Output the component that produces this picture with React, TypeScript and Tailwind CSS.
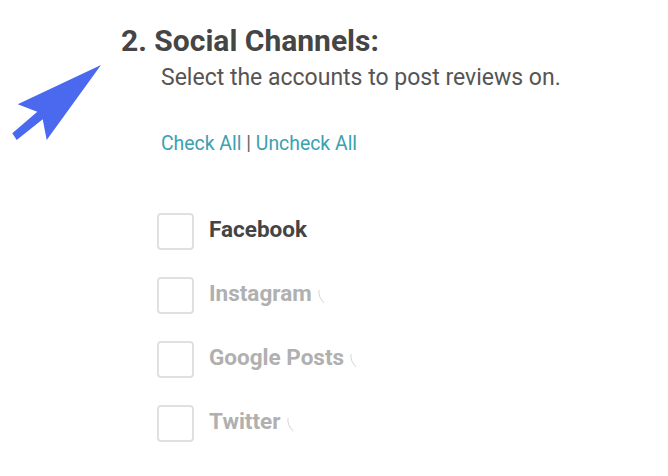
const channels = [
  { name: 'Facebook', active: true },
  { name: 'Instagram', active: false, mark: true },
  { name: 'Google Posts', active: false, mark: true },
  { name: 'Twitter', active: false, mark: true },
];

// pointer arrow drawn over the page
function Pointer() {
  return (
    <svg className="absolute left-0 top-0" width="110" height="150" viewBox="0 0 110 150">
      <polygon
        points="101,65 17.7,104.3 37.3,111.7 12.3,133.3 16.7,140 42.7,119.3 46.7,140"
        fill="#4a69ee"
      />
    </svg>
  );
}

export default function App() {
  return (
    <div className="relative w-[668px] h-[476px] bg-white overflow-hidden font-['Roboto',sans-serif]">
      <Pointer />
      <div className="pl-[121px] pt-[23px]">
        <h2 className="text-[30px] leading-[36px] font-bold text-[#454545]">2. Social Channels:</h2>
        <div className="pl-[40px]">
          <p className="mt-[5px] text-[23px] leading-[28px] text-[#555]">
            Select the accounts to post reviews on.
          </p>
          <div className="mt-[40px] text-[19.4px] leading-[24px] text-[#3b9fb1]">
            <span>Check All</span>
            <span className="text-[#666]"> | </span>
            <span>Uncheck All</span>
          </div>
          <ul className="mt-[57px] -ml-[4px] flex flex-col gap-[27px]">
            {channels.map((c) => (
              <li key={c.name} className="flex items-center gap-[15px] h-[37px]">
                <span className="w-[37px] h-[37px] rounded-[4px] border-2 border-[#e0e0e0] bg-white" />
                <span
                  className={`-mt-[5px] text-[22.5px] leading-[28px] font-bold ${c.active ? 'text-[#444]' : 'text-[#b0b0b0]'}`}
                >
                  {c.name}
                </span>
                {c.mark && (
                  <svg width="10" height="20" viewBox="0 0 10 20" className="-ml-[10px] mt-[4px]">
                    <path d="M2 2 Q1 9 7 15" stroke="#d6d6d6" strokeWidth="1" fill="none" />
                  </svg>
                )}
              </li>
            ))}
          </ul>
        </div>
      </div>
    </div>
  );
}
